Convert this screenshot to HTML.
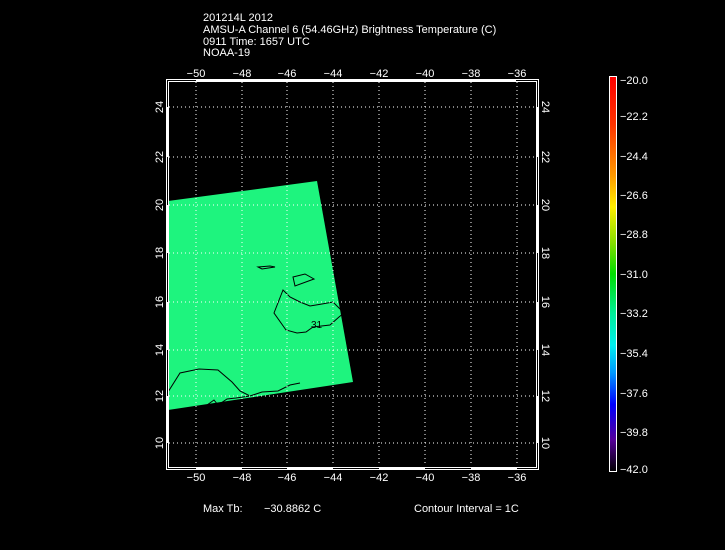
<!DOCTYPE html>
<html><head><style>
html,body{margin:0;padding:0;background:#000;width:725px;height:550px;overflow:hidden}
svg{display:block}
text{font-family:"Liberation Sans",sans-serif;fill:#fff;font-size:11px}
</style></head><body>
<svg width="725" height="550" viewBox="0 0 725 550" xmlns="http://www.w3.org/2000/svg">
<defs>
<linearGradient id="cb" x1="0" y1="0" x2="0" y2="1">
<stop offset="0" stop-color="#ff0000"/>
<stop offset="0.12" stop-color="#ff3300"/>
<stop offset="0.25" stop-color="#ff9900"/>
<stop offset="0.33" stop-color="#ffee00"/>
<stop offset="0.42" stop-color="#88dd00"/>
<stop offset="0.5" stop-color="#00dd00"/>
<stop offset="0.6" stop-color="#00ee99"/>
<stop offset="0.68" stop-color="#00eeee"/>
<stop offset="0.75" stop-color="#0099ff"/>
<stop offset="0.83" stop-color="#0000ff"/>
<stop offset="0.92" stop-color="#550099"/>
<stop offset="1" stop-color="#000000"/>
</linearGradient>
</defs>
<text x="203" y="21">201214L 2012</text>
<text x="203" y="33">AMSU-A Channel 6 (54.46GHz) Brightness Temperature (C)</text>
<text x="203" y="45">0911 Time: 1657 UTC</text>
<text x="203" y="56">NOAA-19</text>

<polygon points="168,201 317,181 353,382 168,410" fill="#1ef47e"/>
<g fill="none" stroke="#000" stroke-width="1">
<path d="M258,267 L270,266 L275,267 L262,269 Z"/>
<path d="M293,277 L305,274 L314,279 L295,286 Z"/>
<path d="M283,290 L274,313 L286,330 L297,333 L306,332 L313,327 L330,325 L339,317 L344,313 L333,302 L322,304 L310,306 L300,302 L290,297 Z"/>
<path d="M168,392 L180,373 L199,369 L218,370 L232,382 L240,391 L250,396 L262,392 L278,391 L290,385 L300,383"/>
<path d="M187,412 L192,410 L200,410 L214,400 L218,405 L227,399 L236,398 L250,396"/>
</g>
<text x="311" y="328" style="font-size:10px;fill:#000">31</text>

<g stroke="#fff" stroke-width="1" stroke-dasharray="1,3">
<line x1="196" y1="82" x2="196" y2="466"/><line x1="242" y1="82" x2="242" y2="466"/>
<line x1="287" y1="82" x2="287" y2="466"/><line x1="333" y1="82" x2="333" y2="466"/>
<line x1="379" y1="82" x2="379" y2="466"/><line x1="425" y1="82" x2="425" y2="466"/>
<line x1="471" y1="82" x2="471" y2="466"/><line x1="517" y1="82" x2="517" y2="466"/>
<line x1="169" y1="107" x2="535" y2="107"/><line x1="169" y1="157" x2="535" y2="157"/>
<line x1="169" y1="205" x2="535" y2="205"/><line x1="169" y1="253" x2="535" y2="253"/>
<line x1="169" y1="302" x2="535" y2="302"/><line x1="169" y1="350" x2="535" y2="350"/>
<line x1="169" y1="396" x2="535" y2="396"/><line x1="169" y1="443" x2="535" y2="443"/>
</g>
<rect x="166.5" y="79.5" width="372" height="390" fill="none" stroke="#fff"/>
<rect x="168.5" y="81.5" width="368" height="386" fill="none" stroke="#fff"/>
<g fill="#fff">
<rect x="196" y="79" width="320" height="3"/>
<rect x="196" y="467" width="46" height="3"/><rect x="287" y="467" width="46" height="3"/>
<rect x="379" y="467" width="46" height="3"/><rect x="471" y="467" width="46" height="3"/>
<rect x="166" y="107" width="3" height="50"/><rect x="166" y="205" width="3" height="48"/>
<rect x="166" y="302" width="3" height="48"/><rect x="166" y="396" width="3" height="47"/>
<rect x="536" y="107" width="3" height="50"/><rect x="536" y="205" width="3" height="48"/>
<rect x="536" y="302" width="3" height="48"/><rect x="536" y="396" width="3" height="47"/>
</g>
<g text-anchor="middle">
<text x="196" y="77">−50</text><text x="242" y="77">−48</text><text x="287" y="77">−46</text><text x="333" y="77">−44</text>
<text x="379" y="77">−42</text><text x="425" y="77">−40</text><text x="471" y="77">−38</text><text x="517" y="77">−36</text>
<text x="196" y="481">−50</text><text x="242" y="481">−48</text><text x="287" y="481">−46</text><text x="333" y="481">−44</text>
<text x="379" y="481">−42</text><text x="425" y="481">−40</text><text x="471" y="481">−38</text><text x="517" y="481">−36</text>
</g>
<g text-anchor="middle">
<text transform="translate(163,107) rotate(-90)">24</text><text transform="translate(163,157) rotate(-90)">22</text>
<text transform="translate(163,205) rotate(-90)">20</text><text transform="translate(163,253) rotate(-90)">18</text>
<text transform="translate(163,302) rotate(-90)">16</text><text transform="translate(163,350) rotate(-90)">14</text>
<text transform="translate(163,396) rotate(-90)">12</text><text transform="translate(163,443) rotate(-90)">10</text>
<text transform="translate(542,107) rotate(90)">24</text><text transform="translate(542,157) rotate(90)">22</text>
<text transform="translate(542,205) rotate(90)">20</text><text transform="translate(542,253) rotate(90)">18</text>
<text transform="translate(542,302) rotate(90)">16</text><text transform="translate(542,350) rotate(90)">14</text>
<text transform="translate(542,396) rotate(90)">12</text><text transform="translate(542,443) rotate(90)">10</text>
</g>

<rect x="609.5" y="76.5" width="7" height="395" fill="url(#cb)" stroke="#fff"/>
<g>
<text x="620" y="84">−20.0</text><text x="620" y="120">−22.2</text><text x="620" y="160">−24.4</text>
<text x="620" y="199">−26.6</text><text x="620" y="238">−28.8</text><text x="620" y="278">−31.0</text>
<text x="620" y="317">−33.2</text><text x="620" y="357">−35.4</text><text x="620" y="397">−37.6</text>
<text x="620" y="436">−39.8</text><text x="620" y="473">−42.0</text>
</g>
<text x="203" y="512">Max Tb:</text>
<text x="264" y="512">−30.8862   C</text>
<text x="414" y="512">Contour Interval = 1C</text>
</svg>
</body></html>
